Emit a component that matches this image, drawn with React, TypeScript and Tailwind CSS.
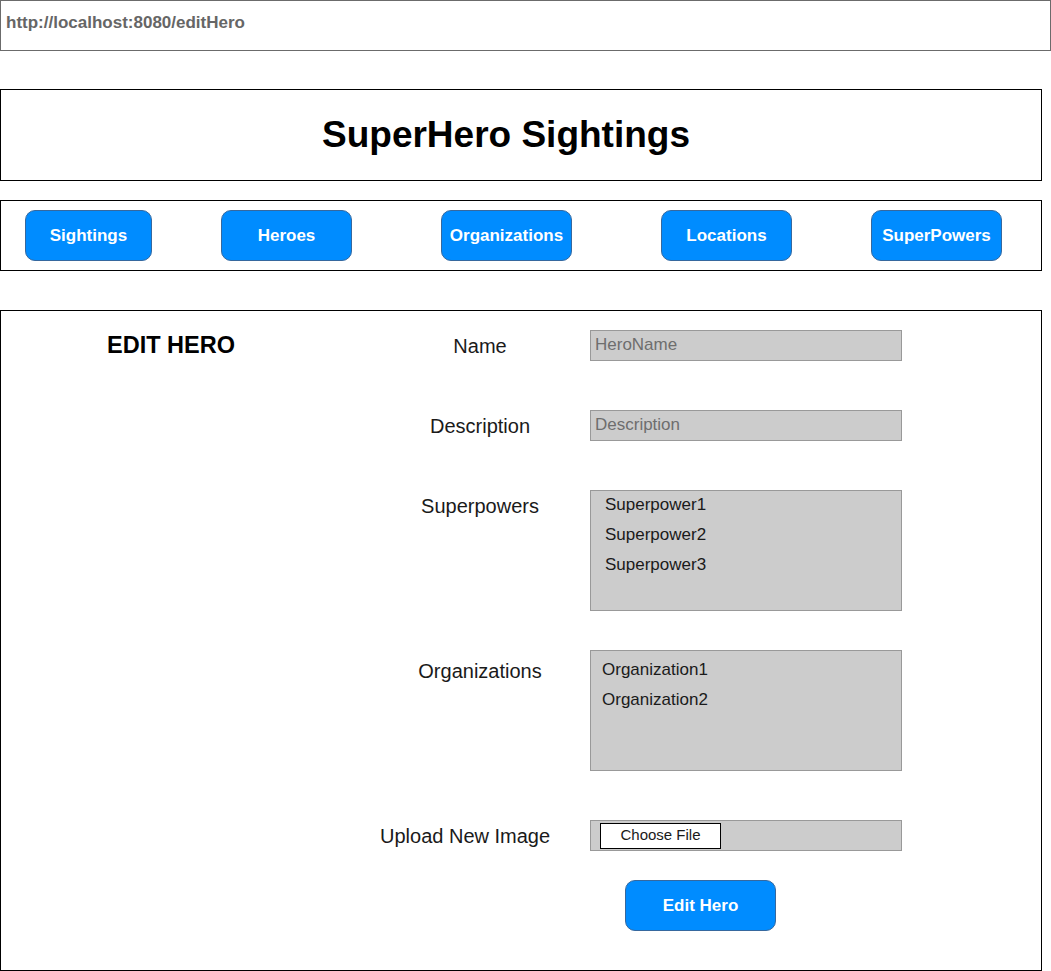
import React from 'react'

const navItems = [
  { label: 'Sightings', cls: 'ml-[24px] w-[127px]' },
  { label: 'Heroes', cls: 'ml-[69px] w-[131px]' },
  { label: 'Organizations', cls: 'ml-[89px] w-[131px]' },
  { label: 'Locations', cls: 'ml-[89px] w-[131px]' },
  { label: 'SuperPowers', cls: 'ml-[79px] w-[131px]' },
]

const superpowers = ['Superpower1', 'Superpower2', 'Superpower3']
const organizations = ['Organization1', 'Organization2']

const font = "font-['Liberation_Sans',Arial,sans-serif]"

function BlueButton({ children, className }: { children: React.ReactNode; className?: string }) {
  return (
    <button className={`h-[51px] rounded-[10px] border border-[#36689e] bg-[#008cff] text-[17px] font-bold text-white ${className ?? ''}`}>
      {children}
    </button>
  )
}

function Label({ children, className }: { children: React.ReactNode; className?: string }) {
  return <div className={`w-[200px] shrink-0 whitespace-nowrap pt-[1px] text-center text-[20px] leading-[30px] text-[#1a1a1a] ${className ?? ''}`}>{children}</div>
}

export default function App() {
  return (
    <div className={`w-[1051px] h-[971px] overflow-hidden bg-white ${font}`}>
      <div className="h-[51px] border border-[#6b6b6b] px-[5px] pt-[12px] text-[17px] font-bold leading-[20px] text-[#666]">
        http://localhost:8080/editHero
      </div>

      <header className="mt-[38px] flex h-[92px] w-[1042px] items-center justify-center border border-black pr-[30px]">
        <h1 className="text-[37px] font-bold text-black">SuperHero Sightings</h1>
      </header>

      <nav className="mt-[19px] flex h-[71px] w-[1042px] items-center border border-black">
        {navItems.map(n => (
          <BlueButton key={n.label} className={n.cls}>{n.label}</BlueButton>
        ))}
      </nav>

      <main className="mt-[39px] flex h-[661px] w-[1042px] border border-black pt-[19px]">
        <div className="w-[379px] shrink-0 pl-[106px]">
          <h2 className="text-[23.5px] font-bold leading-[30px] text-black">EDIT HERO</h2>
        </div>

        <div className="flex flex-col">
          <div className="flex">
            <Label>Name</Label>
            <input readOnly placeholder="HeroName" className="ml-[10px] h-[31px] w-[312px] border border-[#999] bg-[#cccccc] px-[4px] pb-[2px] text-[17px] text-[#333] placeholder:text-[#6e6e6e] outline-none" />
          </div>

          <div className="mt-[49px] flex">
            <Label>Description</Label>
            <input readOnly placeholder="Description" className="ml-[10px] h-[31px] w-[312px] border border-[#999] bg-[#cccccc] px-[4px] pb-[2px] text-[17px] text-[#333] placeholder:text-[#6e6e6e] outline-none" />
          </div>

          <div className="mt-[49px] flex">
            <Label>Superpowers</Label>
            <div className="ml-[10px] h-[121px] w-[312px] border border-[#999] bg-[#cccccc] px-[14px]">
              <ul className="-mt-[1px] flex flex-col text-[17px] leading-[30px] text-[#1a1a1a]">
                {superpowers.map(s => <li key={s}>{s}</li>)}
              </ul>
            </div>
          </div>

          <div className="mt-[39px] flex">
            <Label className="pt-[6px]">Organizations</Label>
            <ul className="ml-[10px] flex h-[121px] w-[312px] flex-col border border-[#999] bg-[#cccccc] px-[11px] pt-[4px] text-[17px] leading-[30px] text-[#1a1a1a]">
              {organizations.map(o => <li key={o}>{o}</li>)}
            </ul>
          </div>

          <div className="mt-[49px] flex">
            <Label className="pr-[30px]">Upload New Image</Label>
            <div className="ml-[10px] flex h-[31px] w-[312px] items-center border border-[#999] bg-[#cccccc] pl-[9px]">
              <button className="h-[26px] w-[121px] border border-black bg-white text-[15px] text-[#1a1a1a]">Choose File</button>
            </div>
          </div>

          <div className="mt-[29px] flex">
            <BlueButton className="ml-[245px] w-[151px]">Edit Hero</BlueButton>
          </div>
        </div>
      </main>
    </div>
  )
}
